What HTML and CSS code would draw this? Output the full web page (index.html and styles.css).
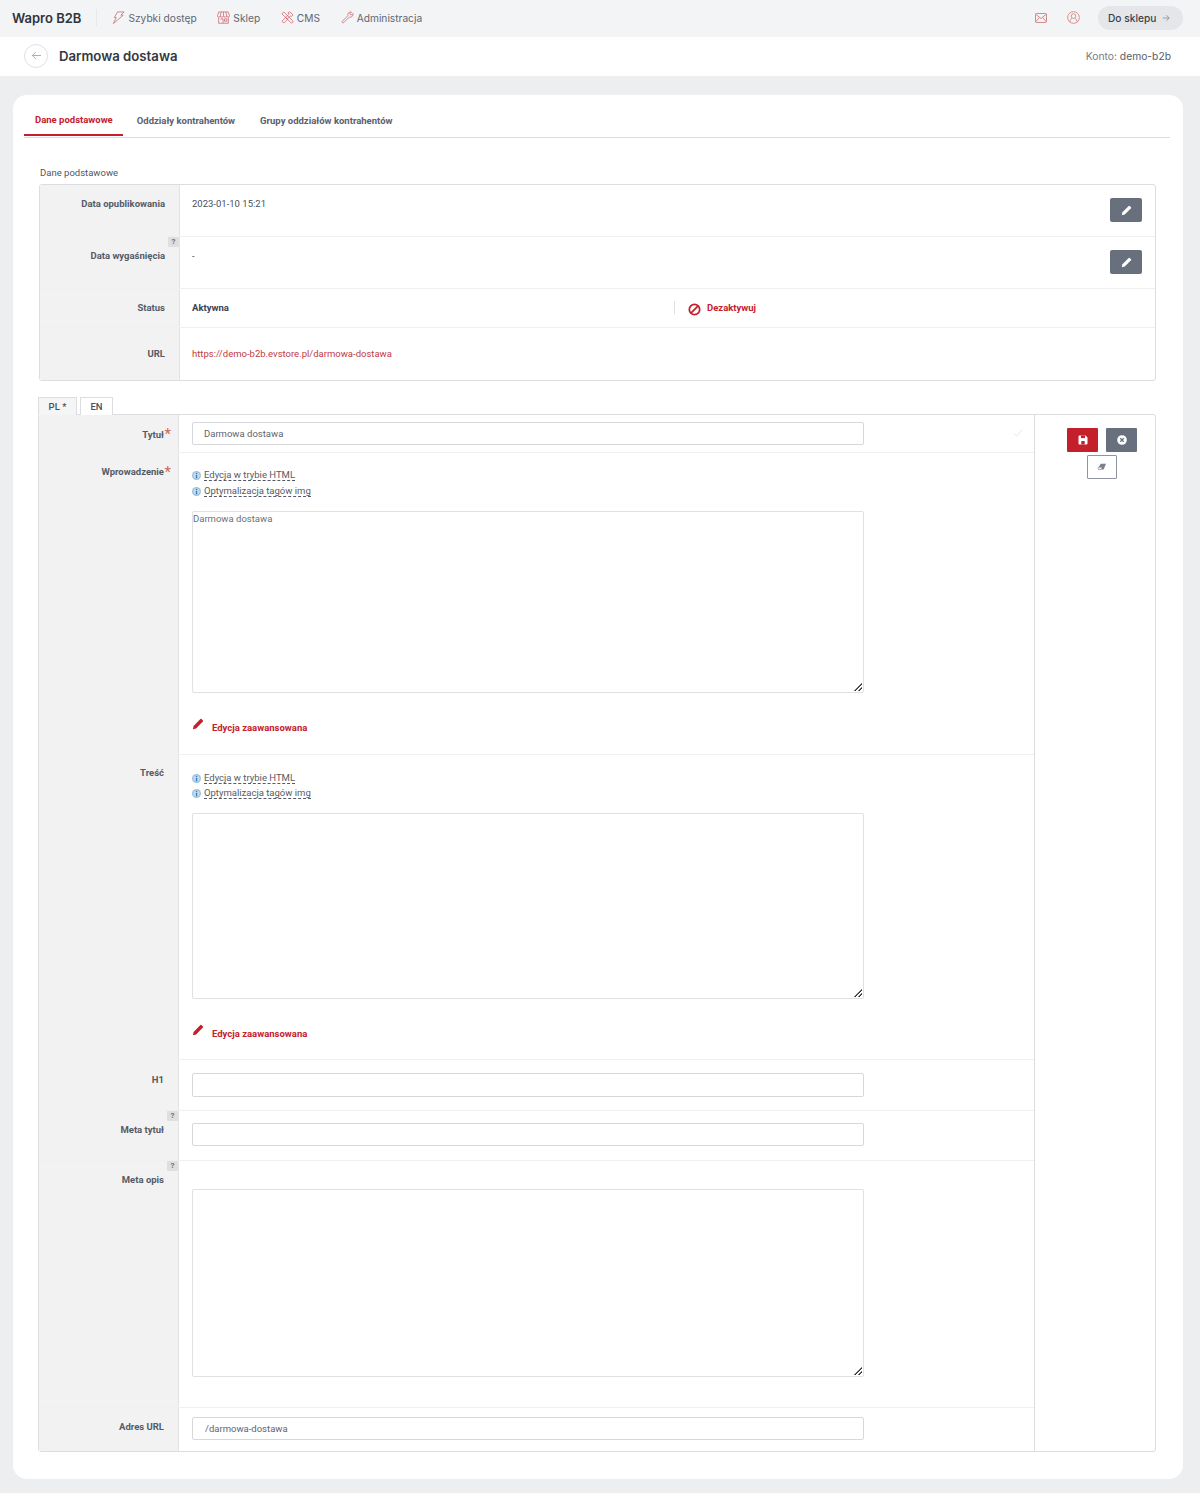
FILE: index.html
```html
<!DOCTYPE html>
<html lang="pl">
<head>
<meta charset="utf-8">
<title>Darmowa dostawa</title>
<link rel="stylesheet" href="styles.css">
</head>
<body>
<svg class="defs" width="0" height="0" aria-hidden="true">
  <symbol id="i-info" viewBox="0 0 10 10"><circle cx="5" cy="5" r="5" fill="#9cc3e3"/><circle cx="5" cy="5" r="3.400" fill="#c7dcee"/><rect x="4.300" y="4.200" width="1.500" height="3.800" fill="#3f78ad"/><rect x="4.300" y="2.200" width="1.500" height="1.200" fill="#3f78ad"/></symbol>
  <symbol id="i-pencil" viewBox="0 0 12 12"><path d="M.8 11.200l.8-3.300L8.400 1.100a.8.8 0 0 1 1.100 0l1.400 1.400a.8.8 0 0 1 0 1.100L4.100 10.400z" fill="currentColor"/></symbol>
</svg>
<header class="topbar">
  <a class="brand">Wapro B2B</a>
  <nav class="mainnav">
    <a class="navitem"><svg class="navicon" viewBox="0 0 14 14"><path d="M6 1h7L9.500 4.500h2.500L1.500 13.500 4.500 7H2.500z"/></svg>Szybki dostęp</a>
    <a class="navitem"><svg class="navicon" viewBox="0 0 14 14"><path d="M2 1h10l1.500 3.800a1.500 1.500 0 0 1-3 .5 1.800 1.800 0 0 1-3.500 0 1.800 1.800 0 0 1-3.500 0 1.500 1.500 0 0 1-3-.5zM4.500 1 3.500 5.300M7 1v4.300M9.500 1l1 4.300M1.800 7v6.200h10.400V7M3.500 8.500h3v4.700M8 8.500h2.700v2.500H8z"/></svg>Sklep</a>
    <a class="navitem"><svg class="navicon" viewBox="0 0 14 14"><path d="M1 3 3 1l9.500 9.500a1.400 1.400 0 0 1-2 2zM7.500 2 9.500 1l3.500 3.200-1.800 1.800-1-.8-3.500 3.500L5 7l3.500-3.500zM1 11l4-4 2 2-4 4z"/></svg>CMS</a>
    <a class="navitem"><svg class="navicon" viewBox="0 0 14 14"><path d="M1.500 11l6-6a3 3 0 0 1 3.800-3.800L9.500 3l1.500 1.500 1.800-1.800A3 3 0 0 1 9 6.500l-6 6a1 1 0 0 1-1.500-1.500z"/></svg>Administracja</a>
  </nav>
  <div class="topright">
    <svg class="topicon mail" viewBox="0 0 12 10"><rect x=".5" y=".5" width="11" height="9" rx="1"/><path d="M.5 1 6 5.500 11.500 1M.5 9 4.300 4.500M11.500 9 7.700 4.500"/></svg>
    <svg class="topicon user" viewBox="0 0 14 14"><circle cx="7" cy="7" r="6.300"/><circle cx="7" cy="5.500" r="2.500"/><path d="M3 12c.5-2.500 1.500-3.800 2.300-4.200M11 12c-.5-2.500-1.500-3.800-2.300-4.200"/></svg>
    <a class="shopbtn">Do sklepu<svg class="shoparrow" viewBox="0 0 10 10"><path d="M1 5h8M5.500 1.500 9 5 5.500 8.500"/></svg></a>
  </div>
</header>
<section class="subbar">
  <a class="backbtn"><svg viewBox="0 0 14 12"><path d="M13 6H1.500M6 1.500 1.500 6 6 10.500"/></svg></a>
  <h1 class="pagetitle">Darmowa dostawa</h1>
  <span class="account">Konto: <b>demo-b2b</b></span>
</section>
<main class="card">
  <div class="tabs">
    <a class="tab active">Dane podstawowe</a>
    <a class="tab">Oddziały kontrahentów</a>
    <a class="tab">Grupy oddziałów kontrahentów</a>
  </div>
  <div class="sectiontitle">Dane podstawowe</div>
  <section class="panel infopanel">
    <div class="row r-date">
      <div class="label">Data opublikowania</div>
      <div class="value spread"><span>2023-01-10 15:21</span><button class="editbtn"><svg class="pen"><use href="#i-pencil"/></svg></button></div>
    </div>
    <div class="row r-date">
      <div class="label"><span class="help">?</span>Data wygaśnięcia</div>
      <div class="value spread"><span>-</span><button class="editbtn"><svg class="pen"><use href="#i-pencil"/></svg></button></div>
    </div>
    <div class="row r-status">
      <div class="label">Status</div>
      <div class="value statusrow"><strong class="statusval">Aktywna</strong><a class="deact"><svg viewBox="0 0 12 12"><circle cx="6" cy="6" r="4.800"/><path d="M2.700 9.300 9.300 2.700"/></svg>Dezaktywuj</a></div>
    </div>
    <div class="row r-url">
      <div class="label">URL</div>
      <div class="value"><a class="link">https://demo-b2b.evstore.pl/darmowa-dostawa</a></div>
    </div>
  </section>
  <div class="langtabs">
    <a class="lang on">PL *</a>
    <a class="lang">EN</a>
  </div>
  <section class="panel formpanel">
    <div class="formmain">
      <div class="row r-title">
        <div class="label">Tytuł<i class="req">*</i></div>
        <div class="value"><input class="field" value="Darmowa dostawa"><svg class="okmark" viewBox="0 0 12 10"><path d="M1 5.500 4.500 9 11 1"/></svg></div>
      </div>
      <div class="row r-intro">
        <div class="label">Wprowadzenie<i class="req">*</i></div>
        <div class="value">
          <ul class="hints">
            <li><svg><use href="#i-info"/></svg><span>Edycja w trybie HTML</span></li>
            <li><svg><use href="#i-info"/></svg><span>Optymalizacja tagów img</span></li>
          </ul>
          <textarea class="area a-intro">Darmowa dostawa</textarea>
          <a class="advanced"><svg><use href="#i-pencil"/></svg>Edycja zaawansowana</a>
        </div>
      </div>
      <div class="row r-body">
        <div class="label">Treść</div>
        <div class="value">
          <ul class="hints">
            <li><svg><use href="#i-info"/></svg><span>Edycja w trybie HTML</span></li>
            <li><svg><use href="#i-info"/></svg><span>Optymalizacja tagów img</span></li>
          </ul>
          <textarea class="area a-body"></textarea>
          <a class="advanced"><svg><use href="#i-pencil"/></svg>Edycja zaawansowana</a>
        </div>
      </div>
      <div class="row r-h1">
        <div class="label">H1</div>
        <div class="value"><input class="field"></div>
      </div>
      <div class="row r-meta">
        <div class="label"><span class="help">?</span>Meta tytuł</div>
        <div class="value"><input class="field"></div>
      </div>
      <div class="row r-desc">
        <div class="label"><span class="help">?</span>Meta opis</div>
        <div class="value"><textarea class="area a-desc"></textarea></div>
      </div>
      <div class="row r-slug">
        <div class="label">Adres URL</div>
        <div class="value"><input class="field" value="/darmowa-dostawa"></div>
      </div>
    </div>
    <aside class="formside">
      <div class="actions">
        <button class="act save"><svg viewBox="0 0 10 10"><path d="M.5 1.500a1 1 0 0 1 1-1h6l2 2v6a1 1 0 0 1-1 1h-7a1 1 0 0 1-1-1z" fill="#fff"/><rect x="3" y=".5" width="4" height="2.600" fill="#c4202b"/><rect x="3.300" y="6" width="3.400" height="3.500" fill="#c4202b"/></svg></button>
        <button class="act cancel"><svg viewBox="0 0 10 10"><circle cx="5" cy="5" r="4.800" fill="#fff"/><path d="M3.300 3.300 6.700 6.700M6.700 3.300 3.300 6.700" stroke="#68707e" stroke-width="1.300"/></svg></button>
        <button class="act clear"><svg viewBox="0 0 12 10"><path d="M4.500 1h6.500L8 8H1.500L1 6.500z" fill="#7a808c"/><path d="M1.800 5.300h4.400L5 8H1.500L1 6.500z" fill="#fff" stroke="#7a808c" stroke-width=".7"/></svg></button>
      </div>
    </aside>
  </section>
</main>
</body>
</html>
```
FILE: styles.css
```css
* { box-sizing: border-box; }
html, body { margin: 0; padding: 0; }
body {
  background: #edeef0;
  font-family: "Roboto", "Liberation Sans", sans-serif;
  font-size: 9.500px;
  color: #3c4250;
  height: 1493px;
  overflow: hidden;
}
.defs { position: absolute; }
a { color: inherit; text-decoration: none; }

.topbar {
  height: 37px;
  display: flex;
  align-items: center;
  background: #f3f4f6;
  padding: 0 17px 2px 12px;
  font-family: "Inter", sans-serif;
}
.brand { font-size: 13px; font-weight: 600; color: #2f3440; letter-spacing: 0; }
.mainnav {
  display: flex;
  align-items: center;
  margin-left: 15px;
  padding-left: 15px;
  border-left: 1px solid #e7e8ea;
  height: 17px;
  gap: 20.700px;
}
.navitem { display: flex; align-items: center; font-size: 10.200px; color: #5f6673; white-space: nowrap; }
.navicon { width: 13px; height: 13px; margin-right: 3px; fill: none; stroke: #c9626a; stroke-width: .8; }
.topright { margin-left: auto; display: flex; align-items: center; }
.topicon { fill: none; stroke: #cf8080; stroke-width: .9; }
.mail { width: 12px; height: 10px; margin-right: 20px; }
.user { width: 13px; height: 13px; margin-right: 18px; }
.shopbtn {
  display: flex;
  align-items: center;
  height: 24px;
  width: 85px;
  padding-left: 10px;
  border-radius: 12px;
  background: #e4e6e9;
  font-size: 10.200px;
  font-weight: 500;
  color: #3a3f4b;
}
.shoparrow { width: 8px; height: 8px; margin-left: 6px; fill: none; stroke: #858b95; stroke-width: 1; }

.subbar {
  height: 39px;
  display: flex;
  align-items: center;
  background: #fff;
  padding: 0 29px 2px 24px;
  font-family: "Inter", sans-serif;
}
.backbtn {
  width: 24px;
  height: 24px;
  border: 1px solid #dfe0e3;
  border-radius: 50%;
  display: flex;
  align-items: center;
  justify-content: center;
}
.backbtn svg { width: 11px; height: 9px; fill: none; stroke: #cf7a7e; stroke-width: 1; }
.pagetitle { margin: 0 0 0 11px; font-size: 13.200px; font-weight: 600; color: #343843; }
.account { margin-left: auto; font-size: 10.300px; color: #777c86; }
.account b { font-weight: 400; color: #595e69; }

.card {
  margin: 19px 17px 0 13px;
  height: 1384px;
  background: #fff;
  border-radius: 14px;
  padding: 0 13px 0 11px;
}
.tabs { display: flex; height: 43px; border-bottom: 1px solid #dddee1; }
.tab {
  display: flex;
  align-items: center;
  height: 42px;
  padding: 16px 12px 8px;
  font-size: 9.500px;
  font-weight: 700;
  color: #5a6070;
  white-space: nowrap;
}
.tab.active { color: #c4202b; padding: 18px 10px 8px 11px; border-bottom: 2px solid #c4202b; height: 41px; }
.tab:nth-child(2) { padding-left: 14px; padding-right: 13px; }

.sectiontitle { margin: 28px 0 0 16px; height: 18px; line-height: 13px; font-size: 9.500px; color: #505662; }

.panel {
  background: #fff;
  border: 1px solid #dcdde0;
  border-radius: 3px;
}
.infopanel { margin-left: 15px; margin-right: 14px; height: 197px; background: linear-gradient(90deg, #f2f2f3 140px, #fff 140px); }
.row { display: grid; grid-template-columns: 140px 1fr; border-bottom: 1px solid #f0f0f2; }
.row:last-child { border-bottom: 0; }
.label {
  position: relative;
  background: #f2f2f3;
  border-right: 1px solid #e3e3e5;
  padding: 14px 14px 0 0;
  text-align: right;
  font-weight: 700;
  font-size: 9.500px;
  line-height: 12px;
  color: #555b66;
}
.infopanel .label { padding-top: 13px; }
.value { position: relative; padding: 13px 13px 0 12px; font-size: 9.500px; line-height: 12px; color: #4a4f5a; min-width: 0; }
.formmain .value { padding-left: 13px; }
.spread { display: flex; justify-content: space-between; align-items: flex-start; }
.help {
  position: absolute;
  top: 0;
  right: 0;
  width: 11px;
  height: 10px;
  background: #dfdfe1;
  border-radius: 1px;
  font-size: 8px;
  font-weight: 700;
  line-height: 10px;
  text-align: center;
  color: #6d7280;
}
.r-date { height: 52px; }
.r-status { height: 39px; }
.r-url { height: 52px; }
.r-url .value { padding-top: 20px; }
.infopanel .r-url .label { padding-top: 20px; }
.editbtn {
  width: 32px;
  height: 24px;
  padding: 0;
  margin-top: 0;
  border: 0;
  border-radius: 2px;
  background: #68707e;
  color: #fff;
  display: flex;
  align-items: center;
  justify-content: center;
}
.pen { width: 11px; height: 11px; }
.statusrow { display: flex; align-items: flex-start; padding-top: 13px; }
.statusval { width: 482px; font-weight: 700; color: #3c4250; }
.deact {
  display: flex;
  align-items: center;
  height: 13px;
  margin-top: -1px;
  padding-left: 13px;
  border-left: 1px solid #dfe0e2;
  color: #c4202b;
  font-weight: 700;
}
.deact svg { width: 13px; height: 13px; margin-right: 6px; margin-top: 4px; fill: none; stroke: #c4202b; stroke-width: 1.600; }
.link { color: #bf3a44; }

.langtabs { display: flex; gap: 3px; margin: 16px 0 -1px 14px; position: relative; }
.lang {
  height: 18px;
  border: 1px solid #dcdde0;
  border-bottom: 0;
  font-size: 9.500px;
  font-weight: 500;
  line-height: 18px;
  text-align: center;
  color: #4a4f5a;
  width: 33px;
  background: #fff;
}
.lang.on { width: 39px; background: #f5f5f6; height: 18px; }

.formpanel { margin: 0 14px; height: 1038px; display: flex; }
.formmain { flex: none; width: 996px; border-right: 1px solid #dcdde0; }
.formside { flex: 1; min-width: 0; padding: 13px 18px 0 32px; }
.actions { display: flex; flex-wrap: wrap; justify-content: center; gap: 3px 8px; }
.act { height: 24px; padding: 0; border: 0; border-radius: 1px; display: flex; align-items: center; justify-content: center; }
.act svg { width: 10px; height: 10px; }
.save { width: 31px; background: #c4202b; }
.cancel { width: 31px; background: #68707e; }
.clear { width: 30px; height: 24px; background: #fff; border: 1px solid #8f95a0; }
.clear svg { width: 10px; height: 8px; }

.field {
  display: block;
  flex: none;
  width: 672px;
  height: 23px;
  padding: 0 12px;
  border: 1px solid #d7d8db;
  border-radius: 2px;
  background: #fff;
  font: 9.500px "Roboto", sans-serif;
  color: #5f6570;
  outline: 0;
}
.area {
  display: block;
  width: 672px;
  padding: 0;
  border: 1px solid #e0e1e3;
  border-radius: 2px;
  background: #fff linear-gradient(135deg, transparent 48%, #777 48%, #777 60%, transparent 60%, transparent 74%, #777 74%, #777 86%, transparent 86%) no-repeat right 1px bottom 1px / 8px 8px;
  font: 9.500px/13px "Roboto", sans-serif;
  color: #6a707b;
  outline: 0;
}
.req { font-style: normal; font-size: 15px; line-height: 10px; color: #d0664f; font-weight: 400; position: absolute; right: 7px; top: 14px; }

.r-title { height: 38px; }
.r-title .value { padding-top: 7px; display: flex; }
.r-title .field { padding-left: 11px; }
.okmark { flex: none; width: 10px; height: 8px; margin: 7px 0 0 149px; fill: none; stroke: #d8e4d8; stroke-width: 1; }
.r-intro { height: 302px; }
.r-intro .label { padding-top: 13px; }
.r-body { height: 305px; }
.r-body .label { padding-top: 12px; }
.hints { margin: 0; padding: 1px 0 0; list-style: none; color: #555b66; }
.r-body .hints { padding-top: 2px; }
.hints li { display: flex; align-items: center; height: 15.500px; }
.r-intro .hints li { height: 16px; }
.hints svg { width: 9px; height: 9px; margin: 1px 3px 0 0; flex: none; }
.hints span { border-bottom: 1px dashed #555b66; line-height: 11px; }
.a-intro { height: 182px; margin-top: 12px; }
.a-body { height: 186px; margin-top: 12px; }
.a-desc { height: 188px; margin-top: 15px; }
.advanced {
  display: flex;
  align-items: center;
  margin-top: 26px;
  height: 18px;
  font-weight: 700;
  color: #c4202b;
}
.advanced svg { width: 12px; height: 12px; margin: -8px 8px 0 0; }
.r-h1 { height: 51px; }
.r-h1 .value { padding-top: 13px; }
.r-h1 .field { height: 24px; }
.r-meta { height: 50px; }
.r-meta .value { padding-top: 12px; }
.r-meta .label { padding-top: 13px; }
.r-desc { height: 247px; }
.r-desc .value { padding-top: 13px; }
.r-desc .label { padding-top: 13px; }
.r-slug { height: 43px; }
.r-slug .value { padding-top: 9px; }
.r-slug .label { padding-top: 13px; }
```
